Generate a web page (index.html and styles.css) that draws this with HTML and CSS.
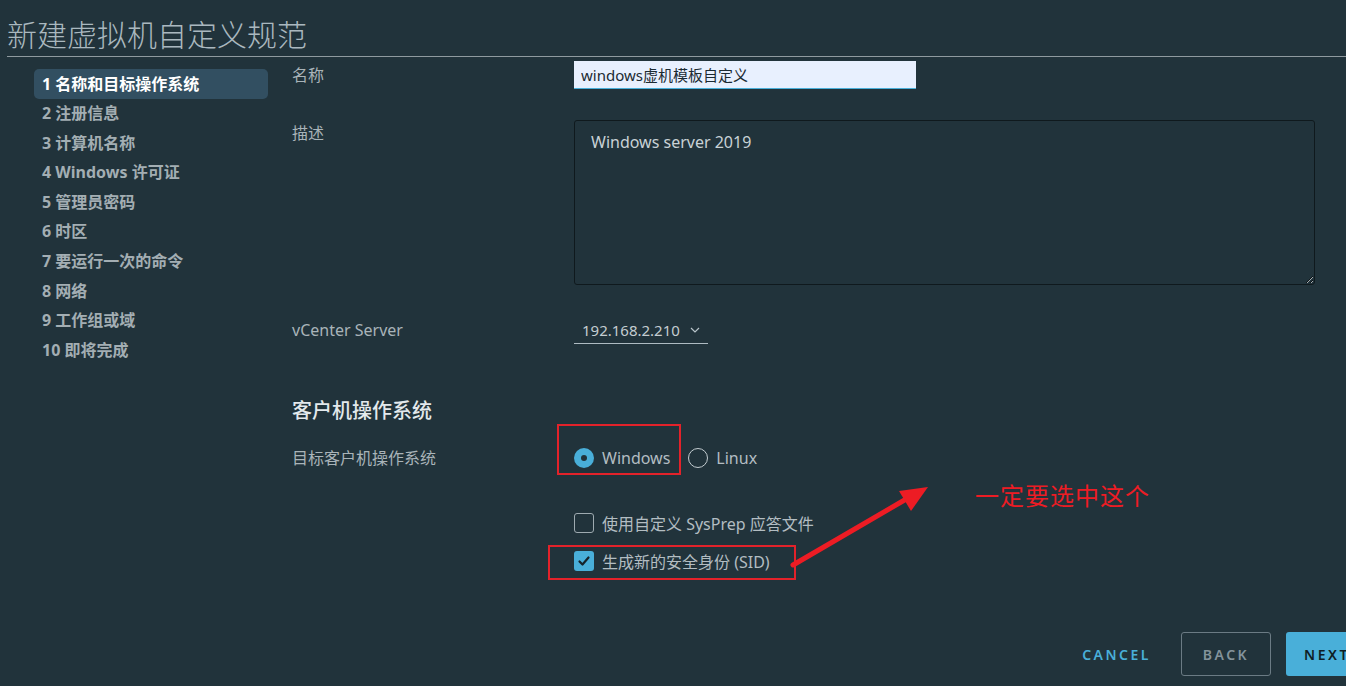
FILE: index.html
```html
<!DOCTYPE html>
<html lang="zh-CN">
<head>
<meta charset="utf-8">
<title>新建虚拟机自定义规范</title>
<link rel="stylesheet" href="styles.css">
</head>
<body>
<div class="page">
  <header class="title-bar">
    <h1>新建虚拟机自定义规范</h1>
  </header>
  <div class="wizard">
    <nav class="steps">
      <div class="step active">1 名称和目标操作系统</div>
      <div class="step">2 注册信息</div>
      <div class="step">3 计算机名称</div>
      <div class="step">4 Windows 许可证</div>
      <div class="step">5 管理员密码</div>
      <div class="step">6 时区</div>
      <div class="step">7 要运行一次的命令</div>
      <div class="step">8 网络</div>
      <div class="step">9 工作组或域</div>
      <div class="step">10 即将完成</div>
    </nav>
    <main class="form">
      <div class="row row-name">
        <label class="label">名称</label>
        <input class="text-input" type="text" value="windows虚机模板自定义">
      </div>
      <div class="row row-desc">
        <label class="label label-top">描述</label>
        <textarea class="textarea">Windows server 2019</textarea>
      </div>
      <div class="row row-vc">
        <label class="label">vCenter Server</label>
        <div class="select">
          <span class="select-value">192.168.2.210</span>
          <svg class="chevron" width="10" height="6" viewBox="0 0 10 6"><polyline points="1,1 5,5 9,1" fill="none" stroke="#b8c4ca" stroke-width="1.2"/></svg>
        </div>
      </div>
      <h2 class="section-title">客户机操作系统</h2>
      <div class="row row-os">
        <label class="label">目标客户机操作系统</label>
        <div class="radios">
          <span class="radio-option"><span class="radio checked"></span><span class="opt-text">Windows</span></span>
          <span class="radio-option"><span class="radio"></span><span class="opt-text">Linux</span></span>
        </div>
      </div>
      <div class="row row-check1">
        <span class="spacer"></span>
        <span class="check-option"><span class="checkbox"></span><span class="opt-text">使用自定义 SysPrep 应答文件</span></span>
      </div>
      <div class="row row-check2">
        <span class="spacer"></span>
        <span class="check-option"><span class="checkbox checked"><svg width="14" height="12" viewBox="0 0 14 12"><polyline points="2.5,6.5 5.5,9.5 11.5,2.5" fill="none" stroke="#15232a" stroke-width="2.2" stroke-linecap="round" stroke-linejoin="round"/></svg></span><span class="opt-text">生成新的安全身份 (SID)</span></span>
      </div>
      <footer class="actions">
        <button class="btn btn-link">CANCEL</button>
        <button class="btn btn-outline">BACK</button>
        <button class="btn btn-primary">NEXT</button>
      </footer>
    </main>
  </div>

  <svg class="annotations" width="1346" height="686" viewBox="0 0 1346 686">
    <rect x="558" y="425" width="122" height="49" fill="none" stroke="#e3222a" stroke-width="2"/>
    <rect x="549" y="546" width="246" height="33" fill="none" stroke="#e3222a" stroke-width="2"/>
    <line x1="793" y1="565" x2="908" y2="498" stroke="#ed1c24" stroke-width="5" stroke-linecap="round"/>
    <polygon points="928,487 899,491 911,511" fill="#ed1c24"/>
  </svg>
  <div class="note">一定要选中这个</div>
</div>
</body>
</html>
```
FILE: styles.css
```css
* { box-sizing: border-box; }
html, body {
  margin: 0;
  padding: 0;
  background: #21333b;
  overflow: hidden;
}
body {
  font-family: "Noto Sans", "Noto Sans CJK SC", sans-serif;
  color: #a9b4b9;
}
.page {
  position: relative;
  width: 1346px;
  height: 686px;
  overflow: hidden;
}
.title-bar {
  margin-left: 7px;
  height: 57px;
  border-bottom: 1px solid #8f9a9f;
}
.title-bar h1 {
  margin: 0;
  padding-top: 15px;
  font-size: 30px;
  line-height: 36px;
  font-weight: 300;
  color: #aab8bf;
  font-family: "Noto Sans CJK SC", "Noto Sans", sans-serif;
}
.wizard {
  display: flex;
  gap: 24px;
  padding-left: 34px;
  padding-top: 4px;
}
.steps {
  width: 234px;
  flex: none;
  margin-top: 8px;
  display: flex;
  flex-direction: column;
}
.step {
  height: 29.6px;
  line-height: 29.6px;
  padding-left: 8px;
  font-size: 16px;
  font-weight: 700;
  color: #a3aeb3;
  border-radius: 5px;
  white-space: nowrap;
}
.step.active {
  background: #324f61;
  color: #ffffff;
  height: 30px;
  line-height: 30px;
}
.form {
  flex: 1;
  padding-right: 31px;
  display: flex;
  flex-direction: column;
}
.row {
  display: grid;
  grid-template-columns: 282px 1fr;
  align-items: center;
}
.label {
  font-size: 16px;
  color: #a9b4b9;
  line-height: 28px;
}
.label-top {
  align-self: start;
  line-height: 20px;
  padding-top: 3px;
}
.text-input {
  width: 342px;
  height: 28px;
  border: none;
  border-bottom: 1px solid #49afd9;
  background: #e8f0fe;
  color: #1b2a32;
  font-family: "Noto Sans", "Noto Sans CJK SC", sans-serif;
  font-size: 15px;
  padding: 0 7px;
  outline: none;
}
.row-desc { margin-top: 31px; }
.textarea {
  width: 100%;
  height: 165px;
  background: #21333b;
  border: 1px solid #0f191d;
  border-radius: 3px;
  color: #c9d2d6;
  font-family: "Noto Sans", "Noto Sans CJK SC", sans-serif;
  font-size: 16px;
  padding: 10px 16px;
  resize: both;
  outline: none;
}
.row-vc { margin-top: 31px; height: 28px; }
.select {
  width: 134px;
  height: 28px;
  border-bottom: 1px solid #aebbc2;
  display: flex;
  align-items: center;
  gap: 10px;
  padding-left: 8px;
}
.select-value {
  font-size: 15px;
  color: #c4cdd1;
}
.chevron { margin-top: 1px; }
.section-title {
  margin: 55px 0 0;
  font-size: 20px;
  line-height: 24px;
  font-weight: 500;
  color: #e3e9ec;
}
.row-os { margin-top: 21px; height: 24px; }
.radios {
  display: flex;
  align-items: center;
  gap: 18px;
}
.radio-option, .check-option {
  display: inline-flex;
  align-items: center;
  gap: 8px;
}
.opt-text {
  font-size: 16px;
  color: #b3bdc2;
  white-space: nowrap;
}
.radio {
  width: 20px;
  height: 20px;
  border-radius: 50%;
  border: 1.5px solid #c3ccd0;
  display: inline-block;
  position: relative;
}
.radio.checked {
  border: none;
  background: #49afd9;
}
.radio.checked::after {
  content: "";
  position: absolute;
  left: 7px;
  top: 7px;
  width: 6px;
  height: 6px;
  border-radius: 50%;
  background: #21333b;
}
.row-check1 { margin-top: 43px; height: 24px; }
.row-check2 { margin-top: 14px; height: 24px; }
.checkbox {
  width: 20px;
  height: 20px;
  border: 1px solid #9eaab0;
  border-radius: 3px;
  display: inline-flex;
  align-items: center;
  justify-content: center;
}
.checkbox.checked {
  border: none;
  background: #49afd9;
}
.actions {
  margin-top: 59px;
  margin-right: -61px;
  display: flex;
  justify-content: flex-end;
  align-items: center;
  gap: 15px;
}
.btn {
  height: 44px;
  font-family: "Noto Sans", sans-serif;
  font-size: 14px;
  font-weight: 600;
  letter-spacing: 2.5px;
  border-radius: 3px;
  cursor: pointer;
}
.btn-link {
  background: transparent;
  border: none;
  color: #49afd9;
  padding: 0 15px 0 12px;
}
.btn-outline {
  width: 90px;
  background: transparent;
  border: 1px solid #6b7b84;
  color: #84939b;
}
.btn-primary {
  width: 90px;
  background: #49afd9;
  border: none;
  color: #0f1e25;
  padding-right: 14px;
}
.annotations {
  position: absolute;
  left: 0;
  top: 0;
  pointer-events: none;
}
.note {
  position: absolute;
  left: 975px;
  top: 480px;
  font-family: "Noto Sans CJK SC", sans-serif;
  font-size: 24px;
  line-height: 30px;
  color: #ed1c24;
  font-weight: 400;
  letter-spacing: 1px;
}
```
